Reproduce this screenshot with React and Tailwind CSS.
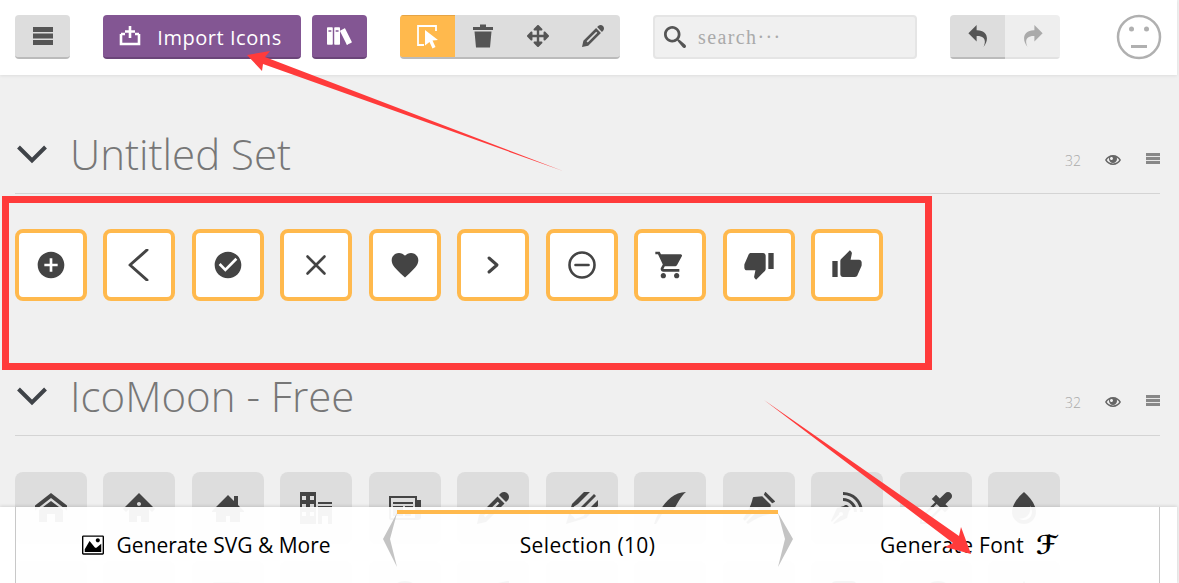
import React from "react";
import {
  ImBooks, ImPencil, ImSearch, ImUndo2, ImRedo2, ImEye, ImImage,
  ImHome, ImHome2, ImHome3, ImOffice, ImNewspaper, ImPencil2, ImQuill, ImPen, ImBlog, ImEyedropper, ImDroplet,
  ImPaintFormat, ImImages, ImCamera, ImHeadphones, ImMusic, ImPlay, ImFilm, ImVideoCamera, ImDice, ImPacman, ImSpades,
} from "react-icons/im";
import { FaArrowsAlt } from "react-icons/fa";
import { MdAddCircle, MdCheckCircle, MdFavorite, MdShoppingCart, MdThumbUp, MdThumbDown } from "react-icons/md";

const Line = ({ w = 2.6, children }) => (
  <svg width="32" height="32" viewBox="0 0 32 32" fill="none" stroke="#444" strokeWidth={w} strokeLinecap="round" strokeLinejoin="round">
    {children}
  </svg>
);

const Bars = ({ width, height, fill }) => (
  <svg width={width} height={height} viewBox="0 0 20 18" fill={fill} preserveAspectRatio="none">
    <rect x="0" y="0" width="20" height="5" />
    <rect x="0" y="6.500" width="20" height="5" />
    <rect x="0" y="13" width="20" height="5" />
  </svg>
);

const selected = [
  <MdAddCircle size={32} />,
  <Line w={3}><polyline points="24,1 7,16 24,31" /></Line>,
  <MdCheckCircle size={32} />,
  <Line><path d="M7.500 7.500 L24.500 24.500 M24.500 7.500 L7.500 24.500" /></Line>,
  <MdFavorite size={32} />,
  <Line w={3}><polyline points="12,9 20,16 12,23" /></Line>,
  <Line><circle cx="16" cy="16" r="12.500" /><path d="M9.500 16 H22.500" /></Line>,
  <MdShoppingCart size={32} />,
  <MdThumbDown size={32} />,
  <MdThumbUp size={32} />,
];

const free = [
  ImHome, ImHome2, ImHome3, ImOffice, ImNewspaper, ImPencil, ImPencil2, ImQuill, ImPen, ImBlog, ImEyedropper, ImDroplet,
  ImPaintFormat, ImImage, ImImages, ImCamera, ImHeadphones, ImMusic, ImPlay, ImFilm, ImVideoCamera, ImDice, ImPacman, ImSpades,
];

function Heading({ title }) {
  return (
    <div className="h-[79px] border-b border-[#d4d4d4] flex items-center">
      <svg width="34" height="24" viewBox="0 0 34 24" fill="none" className="mt-[2px] shrink-0">
        <polyline points="3.500,4 17,17.500 30.500,4" stroke="#3f4348" strokeWidth="4" />
      </svg>
      <span className="ml-[21px] font-['Open_Sans'] font-light text-[42px] leading-none text-[#777]">{title}</span>
      <span className="ml-auto mt-[12px] font-['Open_Sans'] font-light text-[14px] text-[#aaa] w-[16px]">32</span>
      <ImEye size={16} className="ml-[24px] mt-[11px] text-[#666]" />
      <span className="ml-[25px] mt-[9px]"><Bars width={14} height={11} fill="#888" /></span>
    </div>
  );
}

function HBtn({ className = "", children }) {
  return <div className={"h-[44px] flex items-center justify-center " + className}>{children}</div>;
}

export default function App() {
  return (
    <div className="relative w-[1179px] h-[583px] overflow-hidden bg-[#f0f0f0] font-['Open_Sans',sans-serif]">
      {/* top bar */}
      <header className="w-[1177px] h-[75px] bg-white shadow-[0_1px_3px_rgba(0,0,0,0.08)] flex items-center pl-[15px] pb-[1px]">
        <HBtn className="w-[55px] rounded-[4px] bg-[#dddddd] border-b-2 border-[#bbb]">
          <Bars width={20} height={18} fill="#555" />
        </HBtn>
        <HBtn className="ml-[33px] w-[198px] rounded-[4px] bg-[#835693] border-b-2 border-[#6b4579] text-white pr-[4px]">
          <svg width="24" height="22" viewBox="0 0 24 22" fill="none" stroke="white" strokeWidth="2.600">
            <path d="M3 9 V19 H21 V9 M3 9 H7 M21 9 H17 M12 1 V13 M7 6.500 H17" />
          </svg>
          <span className="ml-[15px] mt-[3px] text-[20px] leading-none tracking-[0.55px]">Import Icons</span>
        </HBtn>
        <HBtn className="ml-[11px] w-[55px] rounded-[4px] bg-[#835693] border-b-2 border-[#6b4579] text-white">
          <ImBooks size={26} />
        </HBtn>
        <div className="ml-[33px] flex rounded-[4px] overflow-hidden border-b-2 border-[#bbb] h-[44px] bg-[#dddddd] text-[#555]">
          <div className="w-[55px] bg-[#ffb94d] border-t border-[#e5a445] flex items-center justify-center">
            <svg width="24" height="26" viewBox="0 0 24 26" fill="none">
              <path d="M8 21 H2 V2 H20 V7" stroke="white" strokeWidth="1.800" />
              <path d="M9 6 L22 16 L16.500 16.500 L19.500 23 L16.500 24.500 L13.500 18 L9 21.500 Z" fill="white" />
            </svg>
          </div>
          <div className="w-[55px] flex items-center justify-center">
            <svg width="22" height="24" viewBox="0 0 22 24" fill="#555">
              <path d="M8 0.500 H14 V3 H21 V6 H1 V3 H8 Z M2.500 7.500 H19.500 L18 23.500 H4 Z" />
            </svg>
          </div>
          <div className="w-[55px] flex items-center justify-center"><FaArrowsAlt size={22} /></div>
          <div className="w-[55px] flex items-center justify-center"><ImPencil size={22} /></div>
        </div>
        <div className="ml-[33px] w-[264px] h-[44px] rounded-[4px] bg-[#f0f0f0] border-2 border-[#e5e5e5] flex items-center pl-[9px] text-[#555]">
          <ImSearch size={22} />
          <span className="ml-[12px] font-['Liberation_Serif'] text-[20px] tracking-[1.4px] text-[#aaa]">search···</span>
        </div>
        <div className="ml-[33px] flex rounded-[4px] overflow-hidden h-[44px]">
          <div className="w-[55px] bg-[#dddddd] border-b-2 border-[#bbb] flex items-center justify-center text-[#555]"><ImUndo2 size={22} /></div>
          <div className="w-[55px] bg-[#eeeeee] border-b-2 border-[#e2e2e2] flex items-center justify-center text-[#aaa]"><ImRedo2 size={22} /></div>
        </div>
        <svg width="46" height="46" viewBox="0 0 46 46" fill="none" className="ml-[56px]">
          <circle cx="23" cy="23" r="21" stroke="#b0b0b0" strokeWidth="2.500" />
          <circle cx="15.500" cy="15" r="2.500" fill="#b0b0b0" />
          <circle cx="30.500" cy="15" r="2.500" fill="#b0b0b0" />
          <rect x="15" y="31" width="16" height="3" fill="#b0b0b0" />
        </svg>
      </header>

      {/* icon sets */}
      <main className="w-[1145px] ml-[15px] pt-[40px]">
        <section className="mb-[56px]">
          <Heading title="Untitled Set" />
          <div className="mt-[35px] w-[1046px] ml-[-0.1px] flex flex-wrap gap-x-[16.5px] gap-y-[16.5px]">
            {selected.map((icon, i) => (
              <div key={i} className="w-[72px] h-[72px] rounded-[8px] bg-white border-[4px] border-[#ffb94d] flex items-center justify-center text-[#444]">
                {icon}
              </div>
            ))}
          </div>
        </section>
        <section>
          <Heading title="IcoMoon - Free" />
          <div className="mt-[36px] w-[1046px] ml-[-0.1px] flex flex-wrap gap-x-[16.5px] gap-y-[16.5px]">
            {free.map((Icon, i) => (
              <div key={i} className="w-[72px] h-[72px] rounded-[8px] bg-[#dddddd] flex items-center justify-center text-[#444]">
                <Icon size={32} />
              </div>
            ))}
          </div>
        </section>
      </main>

      {/* bottom bar */}
      <div className="absolute left-0 top-[507px] w-[1177px] h-[76px] bg-white/95 shadow-[0_-1px_3px_rgba(0,0,0,0.12)] flex pl-[15px] pr-[17px] text-[21px] text-black">
        <div className="relative w-[382px] border-l border-[#c8c8c8] flex items-center justify-center">
          <ImImage size={22} />
          <span className="ml-[12px] leading-none">Generate SVG &amp; More</span>
          <svg width="14" height="60" viewBox="0 0 14 60" className="absolute right-0 top-[2px]">
            <polygon points="14,4 0,30 14,58 7,30" fill="#c4c4c4" />
          </svg>
        </div>
        <div className="w-[381px] flex items-center justify-center border-t-[4px] border-[#ffb94d] mt-[3px] pb-[7px]">
          <span className="leading-none tracking-[0.35px]">Selection (10)</span>
        </div>
        <div className="relative flex-1 border-r border-[#c8c8c8] flex items-center justify-center">
          <span className="leading-none tracking-[0.25px]">Generate Font</span>
          <span className="ml-[12px] font-['DejaVu_Sans'] font-bold italic text-[26px] leading-none">ℱ</span>
          <svg width="15" height="60" viewBox="0 0 15 60" className="absolute left-0 top-[2px]">
            <polygon points="0,4 15,30 0,58 7,30" fill="#c4c4c4" />
          </svg>
        </div>
      </div>

      {/* annotations */}
      <div className="absolute left-[2px] top-[196px] w-[930px] h-[174px] border-[7px] border-[#ff3b3b]" />
      <svg width="1179" height="583" viewBox="0 0 1179 583" className="absolute left-0 top-0 pointer-events-none">
        <polygon points="563,171 265,57 270,51 247,55 262,71 263,64" fill="#ff3b3b" />
        <polygon points="764,400 959,536 961,527 971,554 945,547 953,543" fill="#ff3b3b" />
      </svg>
    </div>
  );
}
